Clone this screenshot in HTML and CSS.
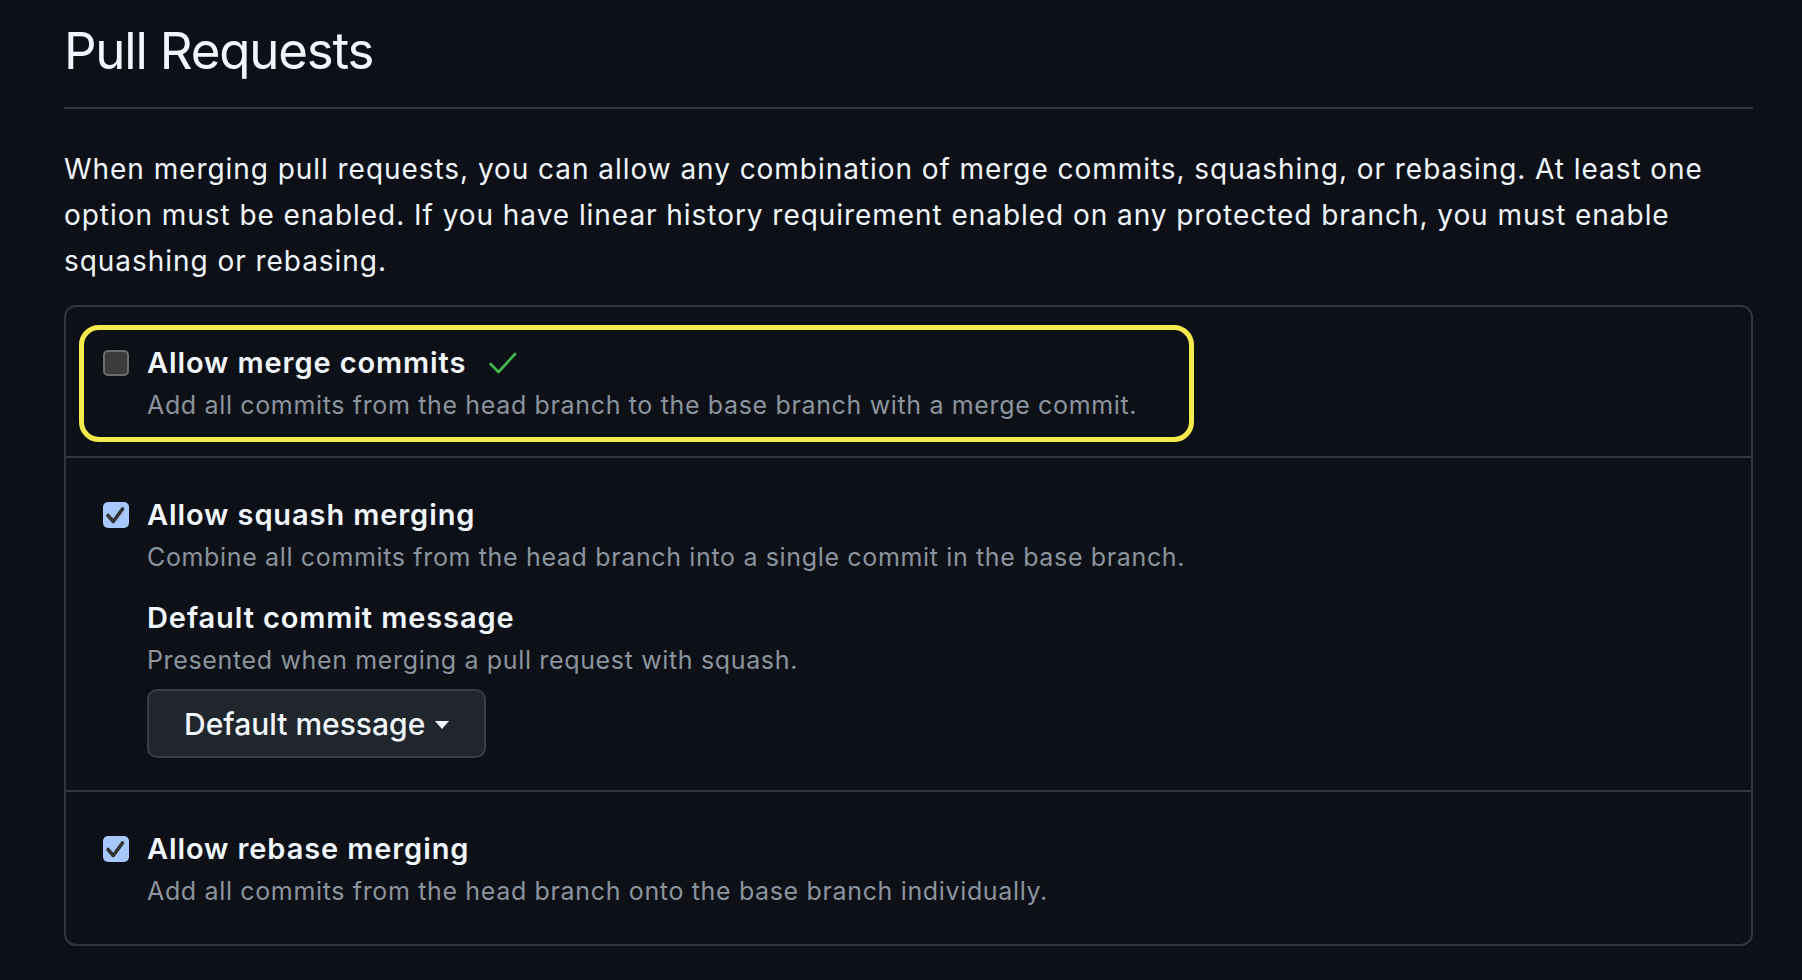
FILE: index.html
```html
<!DOCTYPE html>
<html lang="en">
<head>
<meta charset="utf-8">
<title>Pull Requests</title>
<link rel="stylesheet" href="styles.css">
</head>
<body>
<main class="page">
  <h2 class="title">Pull Requests</h2>
  <p class="intro">When merging pull requests, you can allow any combination of merge commits, squashing, or rebasing. At least one option must be enabled. If you have linear history requirement enabled on any protected branch, you must enable squashing or rebasing.</p>
  <div class="box">
    <div class="row row-first">
      <div class="highlight">
        <div class="option">
          <span class="cb cb-off"></span>
          <div class="option-body">
            <div class="label-line">
              <span class="label">Allow merge commits</span>
              <svg class="ok" width="30" height="24" viewBox="0 0 30 24" aria-hidden="true"><path d="M2.5 13 L10.5 21 L27 3" fill="none" stroke="#3fb950" stroke-width="2.6" stroke-linecap="round" stroke-linejoin="round"/></svg>
            </div>
            <div class="desc">Add all commits from the head branch to the base branch with a merge commit.</div>
          </div>
        </div>
      </div>
    </div>
    <div class="row">
      <div class="option">
        <span class="cb cb-on"><svg width="26" height="26" viewBox="0 0 26 26" aria-hidden="true"><path d="M5 13.5 L10.3 19.5 L19.5 7" fill="none" stroke="#333333" stroke-width="3.6" stroke-linecap="round" stroke-linejoin="round"/></svg></span>
        <div class="option-body">
          <div class="label-line"><span class="label">Allow squash merging</span></div>
          <div class="desc">Combine all commits from the head branch into a single commit in the base branch.</div>
          <div class="sub">
            <div class="label">Default commit message</div>
            <div class="desc">Presented when merging a pull request with squash.</div>
            <button class="btn" type="button">Default message<span class="caret"></span></button>
          </div>
        </div>
      </div>
    </div>
    <div class="row">
      <div class="option">
        <span class="cb cb-on"><svg width="26" height="26" viewBox="0 0 26 26" aria-hidden="true"><path d="M5 13.5 L10.3 19.5 L19.5 7" fill="none" stroke="#333333" stroke-width="3.6" stroke-linecap="round" stroke-linejoin="round"/></svg></span>
        <div class="option-body">
          <div class="label-line"><span class="label">Allow rebase merging</span></div>
          <div class="desc">Add all commits from the head branch onto the base branch individually.</div>
        </div>
      </div>
    </div>
  </div>
</main>
</body>
</html>
```
FILE: styles.css
```css
html, body {
  margin: 0;
  background: #0d1117;
}

body {
  font-family: Inter, "Noto Sans", sans-serif;
  color: #f0f6fc;
}

.page {
  padding: 18px 49px 0 64px;
}

.title {
  margin: 0;
  font-size: 51px;
  font-weight: 400;
  letter-spacing: -1.2px;
  line-height: 65px;
  padding-bottom: 24px;
  border-bottom: 2px solid #30363d;
  color: #f0f6fc;
}

.intro {
  margin: 37px 0 0;
  font-size: 28px;
  letter-spacing: 0.95px;
  line-height: 46px;
  color: #f0f6fc;
}

.box {
  margin-top: 21px;
  border: 2px solid #30363d;
  border-radius: 12px;
}

.row {
  padding: 36px 37px 32px;
}

.row + .row {
  border-top: 2px solid #30363d;
}

.row-first {
  padding: 18px 13px 14px;
}

.highlight {
  width: 1115px;
  box-sizing: border-box;
  border: 5px solid #f5e94b;
  border-radius: 20px;
  padding: 12px 19px 11px;
}

.option {
  display: flex;
  align-items: flex-start;
  gap: 18px;
}

.cb {
  flex: none;
  width: 26px;
  height: 26px;
  margin-top: 8px;
  box-sizing: border-box;
  border-radius: 5px;
  display: block;
}

.cb svg {
  display: block;
}

.cb-off {
  background: #3c3c3c;
  border: 2px solid #6c6c6c;
}

.cb-on {
  background: #a6c8fb;
}

.option-body {
  display: flex;
  flex-direction: column;
  align-items: flex-start;
}

.label-line {
  display: flex;
  align-items: center;
  gap: 22px;
  height: 42px;
}

.label {
  font-size: 29px;
  font-weight: 600;
  letter-spacing: 0.9px;
  line-height: 42px;
  color: #f0f6fc;
}

.ok {
  display: block;
}

.desc {
  font-size: 25px;
  letter-spacing: 0.65px;
  line-height: 42px;
  color: #8b949e;
}

.sub {
  margin-top: 19px;
  display: flex;
  flex-direction: column;
  align-items: flex-start;
}

.btn {
  margin-top: 8px;
  display: inline-flex;
  align-items: center;
  gap: 10px;
  height: 69px;
  box-sizing: border-box;
  padding: 0 35px;
  border: 2px solid #383d45;
  border-radius: 10px;
  background: #21262d;
  color: #f0f6fc;
  font-family: Inter, "Noto Sans", sans-serif;
  font-size: 30px;
  font-weight: 500;
}

.caret {
  width: 0;
  height: 0;
  border-left: 7px solid transparent;
  border-right: 7px solid transparent;
  border-top: 8px solid #f0f6fc;
  margin-top: 2px;
}
```
